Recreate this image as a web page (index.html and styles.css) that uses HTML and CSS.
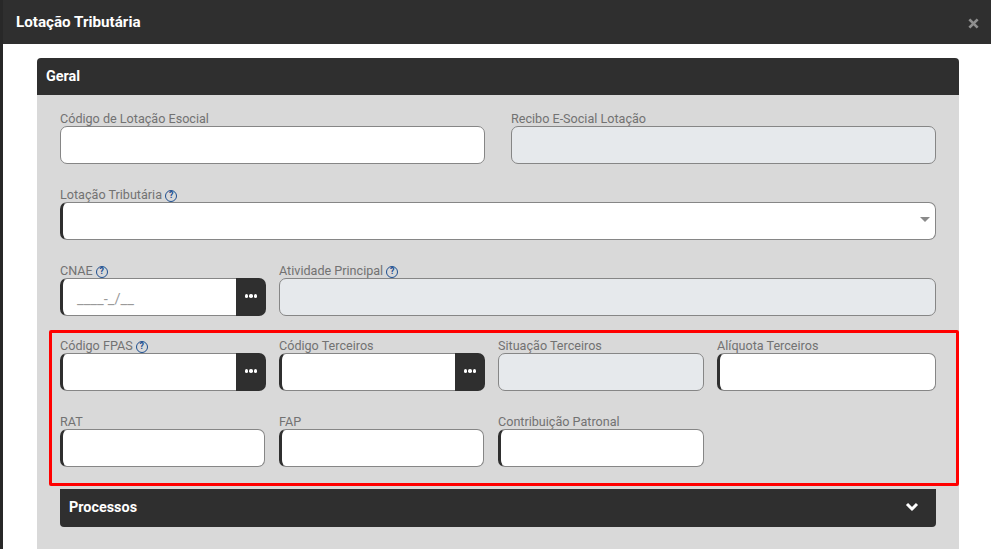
FILE: index.html
```html
<!DOCTYPE html>
<html lang="pt-BR">
<head>
<meta charset="utf-8">
<title>Lotação Tributária</title>
<link rel="stylesheet" href="styles.css">
</head>
<body>
<div class="modal">
  <header class="modal-head">
    <h1 class="modal-title">Lotação Tributária</h1>
    <svg class="close" viewBox="0 0 12 12" width="11" height="11"><path d="M1.5 1.5l9 9M10.500 1.500l-9 9"/></svg>
  </header>
  <section class="panel">
    <h2 class="panel-head">Geral</h2>
    <div class="panel-body">
      <div class="row two">
        <div class="field"><label class="label">Código de Lotação Esocial</label><div class="input"></div></div>
        <div class="field"><label class="label">Recibo E-Social Lotação</label><div class="input off"></div></div>
      </div>
      <div class="row">
        <div class="field"><label class="label">Lotação Tributária <span class="help">?</span></label><div class="input req select"><span class="caret"></span></div></div>
      </div>
      <div class="row cnae">
        <div class="field"><label class="label">CNAE <span class="help">?</span></label>
          <div class="group"><div class="input req mask">____-_/__</div><button class="more"><i></i><i></i><i></i></button></div></div>
        <div class="field"><label class="label">Atividade Principal <span class="help">?</span></label><div class="input off"></div></div>
      </div>
      <div class="highlight">
        <div class="grid">
          <div class="field"><label class="label">Código FPAS <span class="help">?</span></label>
            <div class="group"><div class="input req"></div><button class="more"><i></i><i></i><i></i></button></div></div>
          <div class="field"><label class="label">Código Terceiros</label>
            <div class="group"><div class="input req"></div><button class="more"><i></i><i></i><i></i></button></div></div>
          <div class="field"><label class="label">Situação Terceiros</label><div class="input off"></div></div>
          <div class="field"><label class="label">Alíquota Terceiros</label><div class="input req"></div></div>
          <div class="field"><label class="label">RAT</label><div class="input req short"></div></div>
          <div class="field"><label class="label">FAP</label><div class="input req short"></div></div>
          <div class="field"><label class="label">Contribuição Patronal</label><div class="input req"></div></div>
        </div>
      </div>
      <div class="accordion">
        <span>Processos</span>
        <svg class="chev" viewBox="0 0 14 10" width="14" height="10"><path d="M2 2l5 5 5-5"/></svg>
      </div>
    </div>
  </section>
</div>
</body>
</html>
```
FILE: styles.css
```css
* { box-sizing: border-box; }
html, body { margin: 0; height: 549px; overflow: hidden; }
body { background: #282828; font-family: Roboto, "Liberation Sans", sans-serif; }
.modal { margin-left: 3px; height: 549px; background: #fff; }
.modal-head { height: 44px; background: #2f2f2f; display: flex; align-items: center; justify-content: space-between; padding: 0 12px 0 13px; }
.modal-title { margin: 0; font-size: 15.2px; font-weight: 700; color: #fff; }
.close { fill: none; stroke: #8f8f8f; stroke-width: 3; margin-top: 3px; }
.panel { margin: 14px 32px 0 34px; }
.panel-head { margin: 0; height: 37px; line-height: 37px; padding-left: 9px; font-size: 14.4px; font-weight: 700; color: #fff; background: #2f2f2f; border-radius: 4px 4px 0 0; }
.panel-body { background: #d9d9d9; height: 460px; padding: 15px 23px; }
.row { margin-bottom: 22px; }
.two { display: grid; grid-template-columns: 425px 425px; gap: 26px; }
.cnae { display: grid; grid-template-columns: 206px 657px; gap: 13px; margin-bottom: 14px; }
.label { display: block; height: 16px; line-height: 17px; font-size: 12.6px; color: #727272; white-space: nowrap; }
.input { height: 38px; background: #fff; border: 1px solid #868686; border-radius: 7px; color: #9a9a9a; font-size: 14.8px; }
.off { background: #e6e9ec; }
.req { border-left: 3px solid #2f2f2f; }
.short { margin-right: 1px; }
.select { position: relative; }
.caret { position: absolute; right: 5px; top: 14px; border: 5px solid transparent; border-top-color: #8a8a8a; border-bottom: 0; }
.mask { line-height: 40px; padding-left: 14px; }
.group { display: flex; }
.group .input { flex: 1; min-width: 0; border-right: 0; border-radius: 7px 0 0 7px; }
.more { width: 30px; height: 38px; padding: 0 0 2px; border: 0; background: #2f2f2f; border-radius: 0 7px 7px 0; display: flex; align-items: center; justify-content: center; gap: 1px; }
.more i { width: 3.5px; height: 3.5px; background: #fff; border-radius: 50%; }
.help { display: inline-flex; width: 12px; height: 12px; border: 1px solid #1d4f91; border-radius: 50%; color: #1d4f91; font-size: 9px; font-weight: 700; align-items: center; justify-content: center; line-height: 1; margin-left: 0; vertical-align: 1px; }
.highlight { margin: 0 -23px 3px -11px; padding: 4px 20px 0 8px; height: 156px; border: 3px solid #f00; border-radius: 2px; }
.grid { display: grid; grid-template-columns: 206px 206px 206px 219px; column-gap: 13px; row-gap: 22px; }
.accordion { height: 38px; background: #2f2f2f; border-radius: 0 0 4px 4px; display: flex; align-items: center; justify-content: space-between; padding: 0 17px 2px 9px; font-size: 14.4px; font-weight: 700; color: #fff; }
.chev { fill: none; stroke: #fff; stroke-width: 3; }
```
